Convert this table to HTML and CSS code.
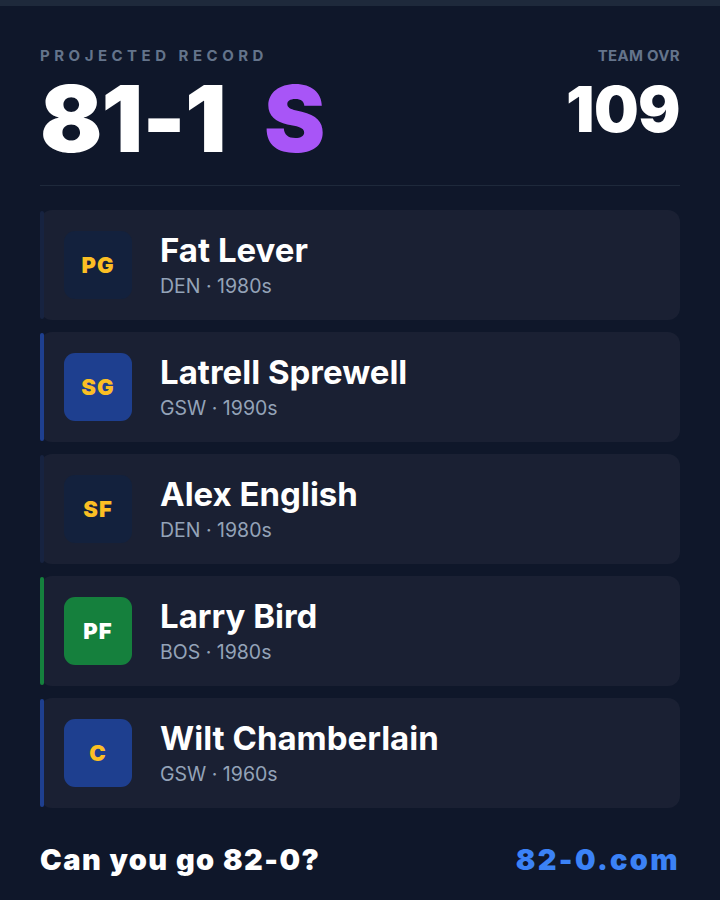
FILE: index.html
```html
<!DOCTYPE html>
<html lang="en">
<head>
  <meta charset="UTF-8" />
  <meta name="viewport" content="width=device-width, initial-scale=1.0"/>
  <title>82-0 Projected Record</title>
  <link rel="stylesheet" href="styles.css">
</head>
<body>
  <div class="topbar"></div>
  <div class="page">
    <div class="header">
      <div class="record-box">
        <div class="label spaced">PROJECTED RECORD</div>
        <div class="record">81-1 <span class="grade">S</span></div>
      </div>
      <div class="ovr-box">
        <div class="label">TEAM OVR</div>
        <div class="ovr">109</div>
      </div>
    </div>

    <div class="divider"></div>

    <div class="roster">
      <div class="card dim">
        <div class="bar"></div>
        <div class="badge">PG</div>
        <div class="info">
          <div class="name">Fat Lever</div>
          <div class="meta">DEN · 1980s</div>
        </div>
      </div>
      <div class="card blue">
        <div class="bar"></div>
        <div class="badge">SG</div>
        <div class="info">
          <div class="name">Latrell Sprewell</div>
          <div class="meta">GSW · 1990s</div>
        </div>
      </div>
      <div class="card dim">
        <div class="bar"></div>
        <div class="badge">SF</div>
        <div class="info">
          <div class="name">Alex English</div>
          <div class="meta">DEN · 1980s</div>
        </div>
      </div>
      <div class="card green">
        <div class="bar"></div>
        <div class="badge">PF</div>
        <div class="info">
          <div class="name">Larry Bird</div>
          <div class="meta">BOS · 1980s</div>
        </div>
      </div>
      <div class="card blue">
        <div class="bar"></div>
        <div class="badge">C</div>
        <div class="info">
          <div class="name">Wilt Chamberlain</div>
          <div class="meta">GSW · 1960s</div>
        </div>
      </div>
    </div>

    <div class="footer">
      <div class="cta">Can you go 82-0?</div>
      <div class="site">82-0.com</div>
    </div>
  </div>
</body>
</html>
```

FILE: styles.css
```css
body {
  font-family: 'Inter', 'Noto Sans', sans-serif;
  background-color: #0f172a;
  margin: 0;
  padding: 0;
  color: #fff;
}
.topbar {
  height: 6px;
  background: #1e293b;
}
.page {
  padding: 0 40px;
}
.header {
  display: flex;
  justify-content: space-between;
  padding-top: 40px;
}
.label {
  font-size: 15px;
  font-weight: 700;
  color: #64748b;
  letter-spacing: 0.02em;
}
.label.spaced {
  letter-spacing: 0.3em;
}
.record {
  font-size: 92px;
  font-weight: 900;
  line-height: 1;
  margin-top: 8px;
  letter-spacing: -0.01em;
}
.grade {
  color: #a855f7;
  margin-left: 21px;
}
.ovr-box {
  text-align: right;
}
.ovr {
  font-size: 63px;
  font-weight: 900;
  line-height: 1;
  margin-top: 13px;
  letter-spacing: -0.01em;
}
.divider {
  border-top: 1px solid #1e293b;
  margin-top: 20px;
}
.roster {
  display: flex;
  flex-direction: column;
  gap: 12px;
  margin-top: 24px;
}
.card {
  display: flex;
  align-items: center;
  height: 110px;
  background: #1a2033;
  border-radius: 12px;
}
.bar {
  align-self: stretch;
  width: 4px;
  margin: 1px 0;
  border-radius: 3px;
  background: #172340;
}
.badge {
  width: 68px;
  height: 68px;
  margin-left: 20px;
  margin-right: 28px;
  border-radius: 11px;
  display: flex;
  align-items: center;
  justify-content: center;
  font-size: 22px;
  font-weight: 900;
  letter-spacing: 0.05em;
  color: #fbbf24;
  background: #13213d;
}
.card.blue .bar,
.card.blue .badge {
  background: #1e3f8f;
}
.card.green .bar,
.card.green .badge {
  background: #15803d;
}
.card.green .badge {
  color: #fff;
}
.name {
  font-size: 33px;
  font-weight: 700;
  line-height: 1.15;
}
.meta {
  font-size: 19.5px;
  color: #94a3b8;
  margin-top: 4px;
}
.footer {
  display: flex;
  justify-content: space-between;
  align-items: center;
  margin-top: 34px;
  font-size: 29px;
  font-weight: 900;
}
.cta {
  letter-spacing: 0.05em;
}
.site {
  color: #3b82f6;
  letter-spacing: 0.08em;
}
```
